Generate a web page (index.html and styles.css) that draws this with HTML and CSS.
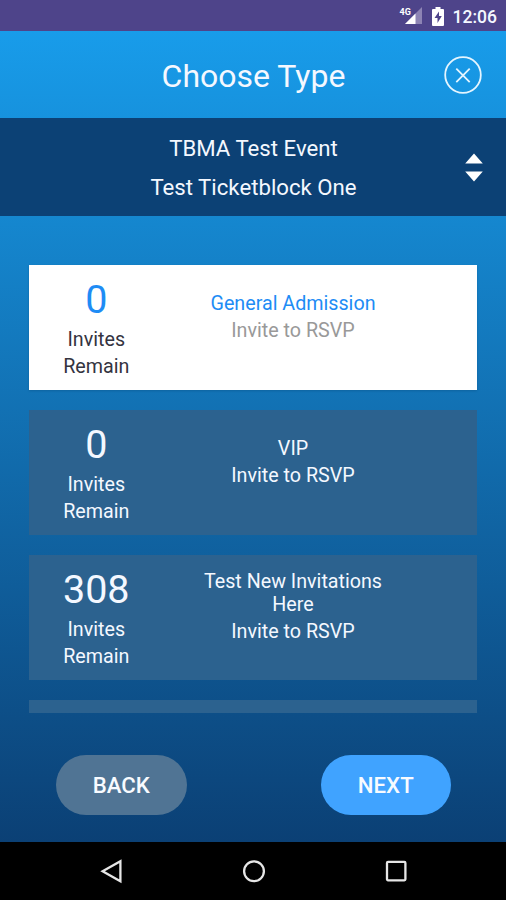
FILE: index.html
```html
<!DOCTYPE html>
<html lang="en">
<head>
<meta charset="utf-8">
<title>Choose Type</title>
<link rel="stylesheet" href="styles.css">
</head>
<body>
<div class="status">
  <svg class="signal" width="22" height="18" viewBox="0 0 22 18"><path d="M5 17 22 0v17Z" fill="#8d84b4"/><path d="M5 17 15.500 6.500V17Z" fill="#fff"/><text x="-.5" y="8" class="net">4G</text></svg>
  <svg class="battery" width="12" height="19" viewBox="0 0 12 19"><path d="M3.500 0h5v2H11q1 0 1 1v15q0 1-1 1H1q-1 0-1-1V3q0-1 1-1h2.500Z" fill="#fff"/><path d="M7 4.500 2.500 11H5.500v5L9.800 9H7Z" fill="#4e448a"/></svg>
  <span class="clock">12:06</span>
</div>
<main class="app">
  <header class="title-bar">
    <h1 class="title">Choose Type</h1>
    <svg class="close" width="38" height="38" viewBox="0 0 38 38"><circle cx="19" cy="19" r="17.800"/><path d="m12.300 12.700 13.400 13.400M25.700 12.700 12.300 26.100"/></svg>
  </header>
  <section class="event">
    <div class="event-line">TBMA Test Event</div>
    <div class="event-line">Test Ticketblock One</div>
    <svg class="sorter" width="18" height="30" viewBox="0 0 18 30"><path d="M9 .500 17.800 10.500H.200ZM.200 18.500H17.800L9 28.500Z"/></svg>
  </section>
  <div class="list">
    <article class="card selected">
      <div class="remain"><div class="count">0</div><div>Invites</div><div>Remain</div></div>
      <div class="info"><div class="name">General Admission</div><div class="kind">Invite to RSVP</div></div>
    </article>
    <article class="card">
      <div class="remain"><div class="count">0</div><div>Invites</div><div>Remain</div></div>
      <div class="info"><div class="name">VIP</div><div class="kind">Invite to RSVP</div></div>
    </article>
    <article class="card">
      <div class="remain"><div class="count">308</div><div>Invites</div><div>Remain</div></div>
      <div class="info two-line"><div class="name">Test New Invitations Here</div><div class="kind">Invite to RSVP</div></div>
    </article>
    <article class="card"></article>
  </div>
  <footer class="actions">
    <button class="button back">BACK</button>
    <button class="button next">NEXT</button>
  </footer>
</main>
<nav class="nav">
  <svg width="24" height="26" viewBox="0 0 24 26"><path d="M20.400 3.200v20L2.600 13.200Z"/></svg>
  <svg width="24" height="26" viewBox="0 0 24 26"><circle cx="12" cy="13.200" r="9.900"/></svg>
  <svg width="24" height="26" viewBox="0 0 24 26"><rect x="3" y="3.900" width="18.400" height="18.400" rx="1"/></svg>
</nav>
</body>
</html>
```
FILE: styles.css
```css
* { box-sizing: border-box; }
body {
  margin: 0;
  width: 506px;
  height: 900px;
  overflow: hidden;
  display: flex;
  flex-direction: column;
  font-family: Roboto, sans-serif;
  color: #f4f8ff;
  background: #000;
}
.status {
  height: 31px;
  flex: none;
  display: flex;
  justify-content: flex-end;
  align-items: center;
  padding: 2px 9px 0 0;
  background: #4e448a;
}
.signal { margin: 0 10px 1px 0; overflow: visible; }
.net { font: 700 9px Roboto, sans-serif; fill: #fff; }
.battery { margin: 0 8.500px 1px 0; }
.clock { font-size: 17.500px; font-weight: 500; line-height: 22px; }
.app {
  height: 811px;
  flex: none;
  display: flex;
  flex-direction: column;
  background: linear-gradient(#189cea, #0b4075);
}
.title-bar {
  height: 87px;
  flex: none;
  display: grid;
  grid-template-columns: 61px 1fr 60px;
  align-items: center;
}
.title {
  grid-column: 2;
  margin: 3px 0 0;
  font-size: 32px;
  font-weight: 400;
  line-height: 38px;
  text-align: center;
}
.close { margin: 1px 0 0 -2px; fill: none; stroke: #e4f5ff; stroke-width: 1.800; }
.event {
  position: relative;
  height: 98px;
  flex: none;
  padding: 11px 0 0 1px;
  background: #0c4175;
}
.event-line { font-size: 22.200px; line-height: 39px; text-align: center; }
.sorter { position: absolute; left: 465px; top: 35px; fill: #fff; }
.list {
  height: 497px;
  flex: none;
  padding: 49px 29px 0;
  display: flex;
  flex-direction: column;
  gap: 19.600px;
  overflow: hidden;
}
.card {
  height: 125.400px;
  flex: none;
  display: flex;
  background: #2c628f;
  font-size: 19.700px;
  line-height: 27px;
  text-align: center;
}
.remain { width: 134.500px; padding-top: 13px; }
.count { height: 48px; font-size: 39.500px; line-height: 44px; }
.info { width: 200px; margin-left: 29.500px; padding-top: 27px; }
.two-line { padding-top: 15px; }
.name { line-height: 24px; }
.two-line .name { line-height: 23.500px; }
.kind { margin-top: 1px; }
.selected { background: #fff; color: #34343f; box-shadow: 0 1px 2px #0a4a8066; }
.selected .count, .selected .name { color: #1e8cf5; }
.selected .kind { color: #999; }
.actions {
  display: flex;
  justify-content: space-between;
  padding: 42px 55px 0 56px;
}
.button {
  width: 130.500px;
  height: 59.500px;
  padding: 0;
  border: 0;
  border-radius: 30px;
  color: #f8fbff;
  font: 500 22.200px Roboto, sans-serif;
}
.back { background: #507494; }
.next { background: #40a3ff; }
.nav {
  flex: 1;
  display: flex;
  justify-content: space-between;
  padding: 15.500px 98px 0 99.500px;
}
.nav svg { fill: none; stroke: #e6e6e6; stroke-width: 2.300; }
```
